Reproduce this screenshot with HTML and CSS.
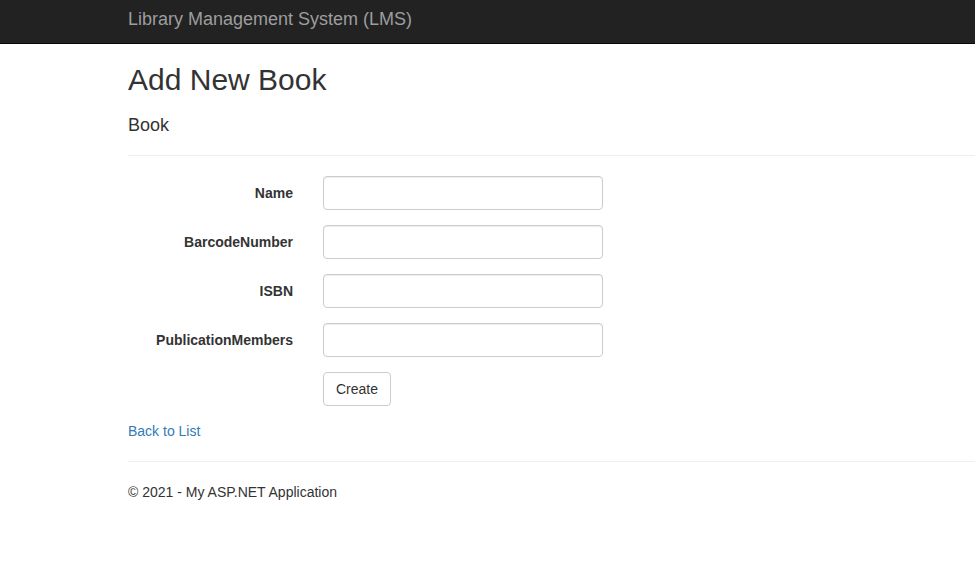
FILE: index.html
```html
<!DOCTYPE html>
<html lang="en">
<head>
<meta charset="utf-8">
<title>Add New Book - Library Management System (LMS)</title>
<link rel="stylesheet" href="styles.css">
</head>
<body>
<header class="navbar">
  <a class="navbar-brand" href="#">Library Management System (LMS)</a>
</header>
<main class="body-content">
  <h2 class="page-title">Add New Book</h2>
  <form class="form-horizontal">
    <h4 class="form-title">Book</h4>
    <hr class="rule">
    <div class="form-grid">
      <label class="control-label" for="Name">Name</label>
      <input class="form-control" id="Name" type="text">
      <label class="control-label" for="BarcodeNumber">BarcodeNumber</label>
      <input class="form-control" id="BarcodeNumber" type="text">
      <label class="control-label" for="ISBN">ISBN</label>
      <input class="form-control" id="ISBN" type="text">
      <label class="control-label" for="PublicationMembers">PublicationMembers</label>
      <input class="form-control" id="PublicationMembers" type="text">
      <span class="spacer"></span>
      <div class="actions"><button class="btn" type="button">Create</button></div>
    </div>
  </form>
  <div class="back-link"><a href="#">Back to List</a></div>
  <hr class="rule footer-rule">
  <footer class="footer">
    <p>&copy; 2021 - My ASP.NET Application</p>
  </footer>
</main>
</body>
</html>
```
FILE: styles.css
```css
* { box-sizing: border-box; }

html, body {
  margin: 0;
  padding: 0;
  background: #fff;
}

body {
  font-family: "Liberation Sans", Arial, Helvetica, sans-serif;
  font-size: 14px;
  line-height: 20px;
  color: #333;
}

.navbar {
  height: 44px;
  background: #222;
  border-bottom: 1px solid #080808;
  padding: 9px 0 0 128px;
}

.navbar-brand {
  display: block;
  font-size: 18px;
  line-height: 20px;
  color: #9d9d9d;
  text-decoration: none;
}

.body-content {
  padding-left: 128px;
}

.page-title {
  margin: 19px 0 19px;
  font-size: 30px;
  font-weight: 500;
  line-height: 33px;
}

.form-horizontal {
  margin: 0;
}

.form-title {
  margin: 0;
  font-size: 18px;
  font-weight: 500;
  line-height: 20px;
}

.rule {
  margin: 20px 0;
  border: 0;
  border-top: 1px solid #eee;
  height: 0;
}

.form-grid {
  display: grid;
  grid-template-columns: 165px 280px;
  column-gap: 30px;
  row-gap: 15px;
  align-items: start;
}

.control-label {
  padding-top: 7px;
  text-align: right;
  font-weight: bold;
  line-height: 20px;
}

.form-control {
  display: block;
  width: 280px;
  height: 34px;
  margin: 0;
  padding: 6px 12px;
  font-family: inherit;
  font-size: 14px;
  line-height: 20px;
  color: #555;
  background: #fff;
  border: 1px solid #ccc;
  border-radius: 4px;
  box-shadow: inset 0 1px 1px rgba(0, 0, 0, .075);
}

.actions {
  padding-bottom: 15px;
}

.btn {
  display: inline-block;
  height: 34px;
  margin: 0;
  padding: 6px 12px;
  font-family: inherit;
  font-size: 14px;
  line-height: 20px;
  color: #333;
  background: #fff;
  border: 1px solid #ccc;
  border-radius: 4px;
  cursor: pointer;
}

.back-link a {
  color: #337ab7;
  text-decoration: none;
}

.footer p {
  margin: 0 0 10px;
}
```
